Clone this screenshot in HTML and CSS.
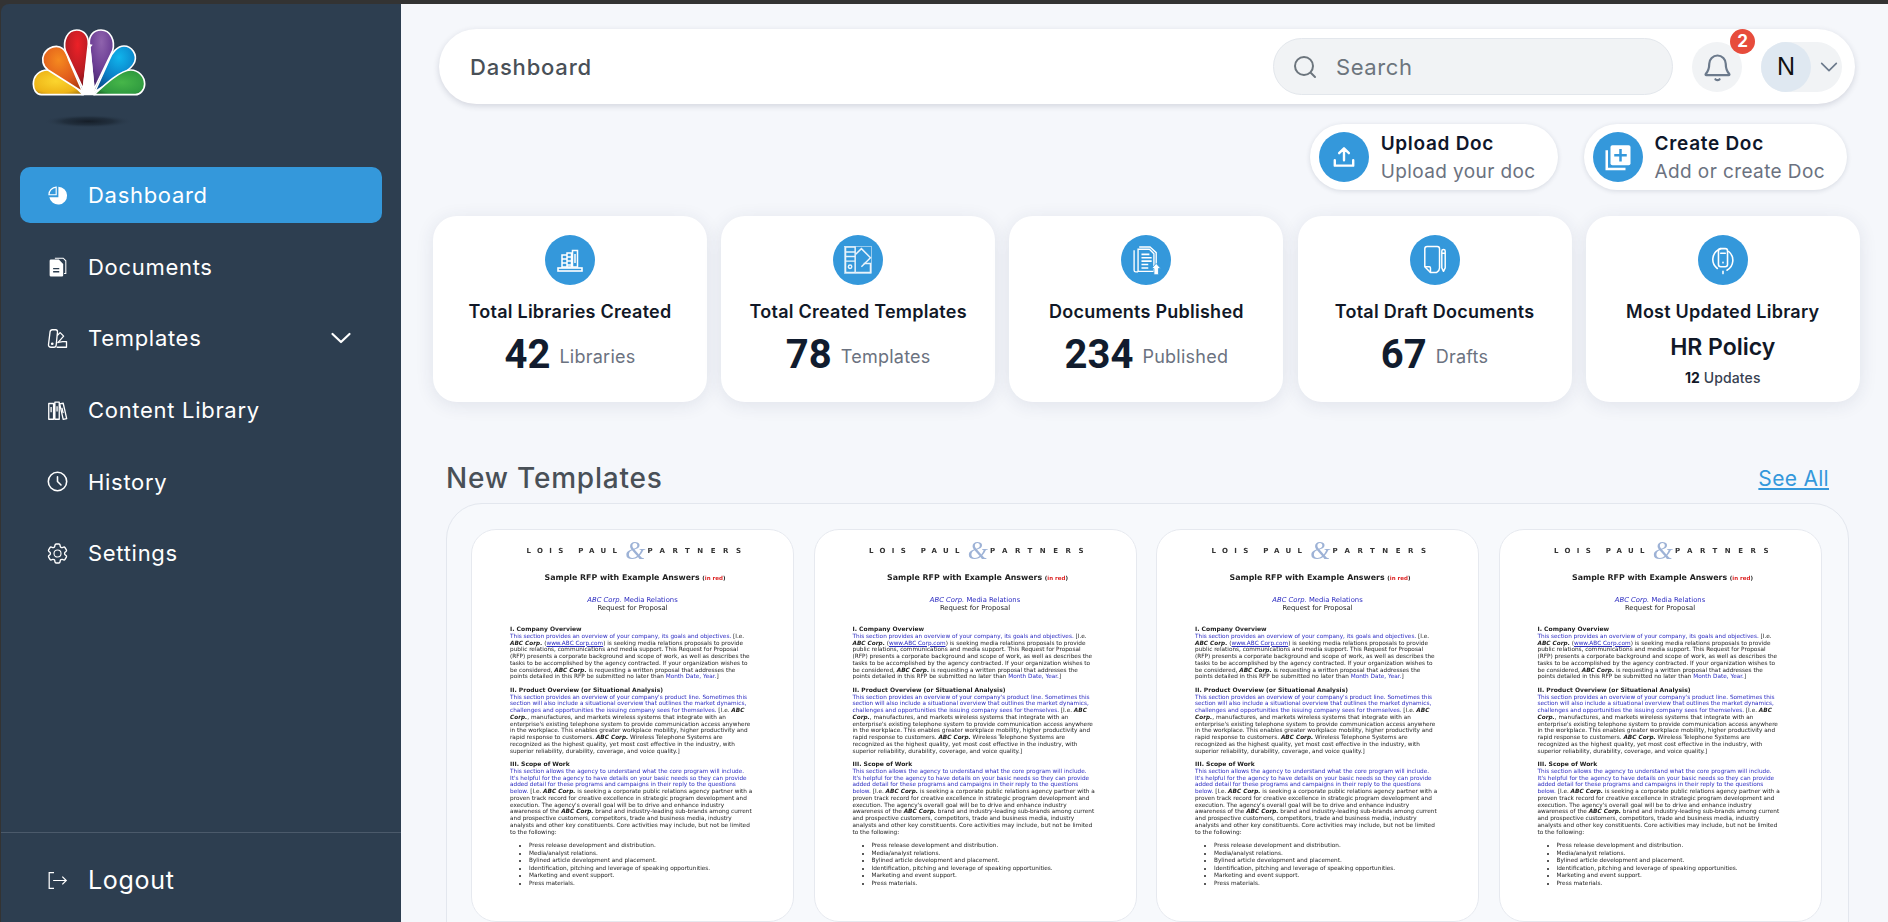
FILE: index.html
```html
<!DOCTYPE html>
<html lang="en">
<head>
  <meta charset="UTF-8">
  <title>Dashboard</title>
  <link rel="stylesheet" href="styles.css">
</head>
<body>
  <div class="app">
    <aside class="sidebar">
      <div class="logo">
        <svg width="140" height="120" viewBox="0 0 420 360">
          <defs>
            <radialGradient id="f-yellow" cx="0.45" cy="0.45" r="0.7"><stop offset="0" stop-color="#fbd52e"/><stop offset="0.7" stop-color="#eeb417"/><stop offset="1" stop-color="#a9780c"/></radialGradient>
            <radialGradient id="f-orange" cx="0.4" cy="0.3" r="0.8"><stop offset="0" stop-color="#f58a1f"/><stop offset="0.6" stop-color="#e0591b"/><stop offset="1" stop-color="#a8380f"/></radialGradient>
            <radialGradient id="f-red" cx="0.55" cy="0.25" r="0.8"><stop offset="0" stop-color="#ec2127"/><stop offset="0.6" stop-color="#b91c23"/><stop offset="1" stop-color="#6f0e13"/></radialGradient>
            <radialGradient id="f-purple" cx="0.5" cy="0.2" r="0.8"><stop offset="0" stop-color="#8f63ad"/><stop offset="0.6" stop-color="#6b3d94"/><stop offset="1" stop-color="#44246a"/></radialGradient>
            <radialGradient id="f-blue" cx="0.6" cy="0.25" r="0.8"><stop offset="0" stop-color="#10b5ec"/><stop offset="0.6" stop-color="#0a7cc4"/><stop offset="1" stop-color="#0a4d8c"/></radialGradient>
            <radialGradient id="f-green" cx="0.55" cy="0.5" r="0.7"><stop offset="0" stop-color="#46b649"/><stop offset="0.7" stop-color="#2f9a3f"/><stop offset="1" stop-color="#14521f"/></radialGradient>
            <radialGradient id="logo-shadow"><stop offset="0" stop-color="#151d27"/><stop offset="0.55" stop-color="#1d2936" stop-opacity="0.75"/><stop offset="1" stop-color="#2d3e50" stop-opacity="0"/></radialGradient>
          </defs>
          <ellipse cx="205" cy="304" rx="135" ry="20" fill="url(#logo-shadow)"/>
          <g stroke="#fff" stroke-width="5" stroke-linejoin="round">
            <path fill="url(#f-yellow)" d="M190 224H64C48 224 40 208 40 192C40 166 60 150 82 150C112 150 165 198 190 224Z"/>
            <path fill="url(#f-orange)" d="M188 216L84 150C68 138 64 118 72 102C84 80 112 72 128 86C138 94 142 106 146 118Z"/>
            <path fill="url(#f-red)" d="M190 208L136 92C128 62 142 30 170 30C194 30 206 50 205 72Z"/>
            <path fill="url(#f-purple)" d="M222 208L208 72C206 50 218 30 243 30C272 30 286 62 278 92Z"/>
            <path fill="url(#f-blue)" d="M224 216L268 118C276 98 292 78 312 78C336 78 352 104 344 126C338 142 320 154 304 164Z"/>
            <path fill="url(#f-green)" d="M222 224C250 198 300 150 332 150C356 150 374 170 374 192C374 210 360 224 346 224Z"/>
          </g>
          <path fill="#fff" d="M184 226L204 88L207 72L218 74L212 82L226 226Z"/>
        </svg>
      </div>
      <nav class="nav">
        <a class="nav-item active">
          <svg class="nav-icon" viewBox="0 0 24 24"><path fill="#fff" d="M13 2a10.200 10.200 0 1 1-10.300 12h10.300z"/><path fill="none" stroke="#fff" stroke-width="1.300" d="M10.500 2.400v8.800H2.200c0-4.800 3.700-8.400 8.300-8.800z"/></svg>
          Dashboard
        </a>
        <a class="nav-item">
          <svg class="nav-icon" viewBox="0 0 24 24"><path fill="none" stroke="#fff" stroke-width="1.200" d="M9 2.500h9.500l3 3v14.500h-2"/><path fill="#fff" d="M4.500 4h9l5 5v13a1.500 1.500 0 0 1-1.500 1.500H4.500A1.500 1.500 0 0 1 3 22V5.500A1.500 1.500 0 0 1 4.500 4z"/><path stroke="#2d3e50" stroke-width="1.500" d="M7 14.500h7M7 18h7"/></svg>
          Documents
        </a>
        <a class="nav-item">
          <svg class="nav-icon" viewBox="0 0 24 24" fill="none" stroke="#fff" stroke-width="1.500" stroke-linejoin="round"><path d="M3.500 4.500c.2-1.500 1-2.500 2.500-2.500h4c1.500 0 2 1 2 2.500l-1.500 15c-.2 1.600-1.200 2.500-2.500 2.500H4.500C2.800 22 1.500 21 1.700 19z"/><path d="M11.700 8.500l3.300-3.200 4 4-7 8"/><path d="M11 22h11.300v-6.500H18l-5.500 1"/><circle cx="6" cy="18" r=".8" fill="#fff"/></svg>
          Templates
          <svg class="nav-chevron" viewBox="0 0 24 24" fill="none" stroke="#fff" stroke-width="2.200" stroke-linecap="round" stroke-linejoin="round"><path d="M3.500 8l8.500 8 8.500-8"/></svg>
        </a>
        <a class="nav-item">
          <svg class="nav-icon" viewBox="0 0 24 24" fill="none" stroke="#fff" stroke-width="1.500" stroke-linejoin="round"><path d="M2 4h5.500v18H2zM9 2.500h5v19.500H9zM14.500 4.500l4-.8 4 17.500-4 1z"/><path d="M4.700 8v6M11.500 7v6M17 9l1.500 6"/></svg>
          Content Library
        </a>
        <a class="nav-item">
          <svg class="nav-icon" viewBox="0 0 24 24" fill="none" stroke="#fff" stroke-width="1.800" stroke-linecap="round"><circle cx="12" cy="12" r="10.500"/><path d="M12 6.500V12l4 4"/></svg>
          History
        </a>
        <a class="nav-item">
          <svg class="nav-icon" viewBox="0 0 24 24" fill="none" stroke="#fff" stroke-width="1.300"><path d="M9.594 3.940c.09-.542.56-.94 1.110-.94h2.593c.55 0 1.020.398 1.110.94l.213 1.281c.063.374.313.686.645.87.074.04.147.083.22.127.325.196.72.257 1.075.124l1.217-.456a1.125 1.125 0 0 1 1.370.49l1.296 2.247a1.125 1.125 0 0 1-.26 1.431l-1.003.827c-.293.241-.438.613-.43.992a7.723 7.723 0 0 1 0 .255c-.008.378.137.75.43.991l1.004.827c.424.35.534.955.26 1.430l-1.298 2.247a1.125 1.125 0 0 1-1.369.491l-1.217-.456c-.355-.133-.75-.072-1.076.124a6.470 6.470 0 0 1-.22.128c-.331.183-.581.495-.644.869l-.213 1.281c-.09.543-.56.94-1.110.94h-2.594c-.55 0-1.019-.398-1.110-.94l-.213-1.281c-.062-.374-.312-.686-.644-.87a6.520 6.520 0 0 1-.22-.127c-.325-.196-.72-.257-1.076-.124l-1.217.456a1.125 1.125 0 0 1-1.369-.49l-1.297-2.247a1.125 1.125 0 0 1 .26-1.431l1.004-.827c.292-.24.437-.613.43-.991a6.932 6.932 0 0 1 0-.255c.007-.38-.138-.751-.43-.992l-1.004-.827a1.125 1.125 0 0 1-.26-1.430l1.297-2.247a1.125 1.125 0 0 1 1.370-.491l1.216.456c.356.133.751.072 1.076-.124.072-.044.146-.086.22-.128.332-.183.582-.495.644-.869l.214-1.280Z" transform="translate(-2.400 -2.400) scale(1.200)"/><circle cx="12" cy="12" r="4"/></svg>
          Settings
        </a>
      </nav>
      <div class="sidebar-foot">
        <a class="nav-item logout">
          <svg class="nav-icon" viewBox="0 0 24 24" fill="none" stroke="#fff" stroke-width="1.400"><path d="M8 3H2.500v18H8"/><path d="M7 12h15M17.500 7.500L22 12l-4.500 4.500"/></svg>
          Logout
        </a>
      </div>
    </aside>

    <main class="main">
      <header class="topbar">
        <div class="topbar-title">Dashboard</div>
        <div class="search">
          <svg class="search-icon" viewBox="0 0 24 24" fill="none" stroke="#6c757d" stroke-width="2" stroke-linecap="round"><circle cx="11" cy="11" r="9"/><path d="M18 18l4 4"/></svg>
          <span>Search</span>
        </div>
        <div class="bell">
          <svg viewBox="0 0 24 24" width="33" height="33" fill="none" stroke="#6c7a8c" stroke-width="1.600" stroke-linejoin="round" stroke-linecap="round"><path d="M6 10a6 6 0 0 1 12 0c0 4.500 1.200 6 2.600 7.500a.5.5 0 0 1-.4.800H3.800a.5.5 0 0 1-.4-.8C4.800 16 6 14.500 6 10Z"/><path d="M10.500 21.300c.8.6 2.200.6 3 0"/></svg>
          <span class="badge">2</span>
        </div>
        <div class="user">
          <span class="avatar">N</span>
          <svg viewBox="0 0 24 24" width="22" height="22" fill="none" stroke="#6c7a8c" stroke-width="1.800" stroke-linecap="round" stroke-linejoin="round"><path d="M4 8l8 8 8-8"/></svg>
        </div>
      </header>

      <div class="actions">
        <a class="action">
          <span class="round-icon action-icon"><svg viewBox="0 0 24 24" width="26" height="26" fill="none" stroke="#fff" stroke-width="2.200" stroke-linecap="round" stroke-linejoin="round"><path d="M12 15V4M7.500 8.500L12 4l4.500 4.500M3.500 15v5h17v-5"/></svg></span>
          <span class="action-text"><b>Upload Doc</b><small>Upload your doc</small></span>
        </a>
        <a class="action">
          <span class="round-icon action-icon"><svg viewBox="0 0 24 24" width="30" height="30"><path fill="#fff" d="M7.500 2.500h13a1.500 1.500 0 0 1 1.500 1.500v13a1.500 1.500 0 0 1-1.500 1.500h-13A1.500 1.500 0 0 1 6 17V4a1.500 1.500 0 0 1 1.500-1.500z"/><path fill="none" stroke="#3498db" stroke-width="2" d="M14 5.500v10M9 10.500h10"/><path fill="none" stroke="#fff" stroke-width="2" d="M3 6.500V21.500h15"/></svg></span>
          <span class="action-text"><b>Create Doc</b><small>Add or create Doc</small></span>
        </a>
      </div>

      <section class="stats">
        <div class="stat">
          <span class="round-icon"><svg viewBox="0 0 30 30" width="30" height="30" fill="none" stroke="#fff" stroke-width="1.500"><path d="M7 10h5v12H7zM12 8h4.500v14H12zM17.500 5.500h5V22h-5z"/><path d="M7 14h5M7 18h5M12 12h4.500M12 16h4.500M12 20h4.500M20 9v9"/><rect x="3" y="23" width="24" height="3" stroke-width="1.600"/></svg></span>
          <h3>Total Libraries Created</h3>
          <p class="stat-line"><strong>42</strong> <span>Libraries</span></p>
        </div>
        <div class="stat">
          <span class="round-icon"><svg viewBox="0 0 30 30" width="34" height="34" fill="none" stroke="#e8f3fb" stroke-width="1.300"><rect x="3" y="3" width="24" height="24" stroke-width=".5"/><path d="M4 3.500h8.500V26H4zM4 8h8.500M4 12h8.500M4 16h8.500"/><circle cx="8" cy="21" r="1.500"/><path d="M13 10l5-5 8 8-8 8"/><path d="M13 26h13v-8h-6"/></svg></span>
          <h3>Total Created Templates</h3>
          <p class="stat-line"><strong>78</strong> <span>Templates</span></p>
        </div>
        <div class="stat">
          <span class="round-icon"><svg viewBox="0 0 30 30" width="34" height="34" fill="none" stroke="#fff" stroke-width="1.200"><path d="M9 3.500h9.500l5.500 5v11M4.500 6.500V24c0 1 .8 1.500 1.500 1.500h2"/><path d="M8 5.500H18l4 4V25H8z" fill="#3498db"/><path stroke-width="1.400" d="M11 10h7M11 13h9M11 16h9M11 19h6M11 22h6"/><path fill="#fff" d="M24 18l4 4.500h-2V28h-4v-5.500h-2z" stroke="#3498db" stroke-width=".7"/></svg></span>
          <h3>Documents Published</h3>
          <p class="stat-line"><strong>234</strong> <span>Published</span></p>
        </div>
        <div class="stat">
          <span class="round-icon"><svg viewBox="0 0 30 30" width="34" height="34" fill="none" stroke="#fff" stroke-width="1.300" stroke-linejoin="round"><path d="M8 3h9c1.200 0 2 .8 2 2v17c0 2-1 3-2.500 4H11l-5-5V5c0-1.200.8-2 2-2z"/><path d="M6 21h4c1 0 1 1 1 1v4"/><path d="M21 7c0-1.800 3-1.800 3 0v15l-1.500 3-1.500-3zM21 9h3"/></svg></span>
          <h3>Total Draft Documents</h3>
          <p class="stat-line"><strong>67</strong> <span>Drafts</span></p>
        </div>
        <div class="stat">
          <span class="round-icon"><svg viewBox="0 0 30 30" width="34" height="34" fill="none" stroke="#fff" stroke-width="1.400" stroke-linecap="round"><path d="M10 22.500A10 10 0 0 1 13 5M20 7.500A10 10 0 0 1 18.500 24"/><rect x="11" y="5" width="8" height="16" rx="2"/><path d="M13 9h4M15 25v2M15 17v.5"/></svg></span>
          <h3>Most Updated Library</h3>
          <p class="stat-big">HR Policy</p>
          <p class="stat-note"><b>12</b> Updates</p>
        </div>
      </section>

      <div class="section-head">
        <h2>New Templates</h2>
        <a class="see-all">See All</a>
      </div>

      <section class="panel" id="doc-panel"></section>

      <template id="doc-template">
        <article class="doc">
          <div class="doc-brand"><span class="brand-name">LOIS PAUL</span><i>&amp;</i><span>PARTNERS</span></div>
          <p class="doc-title">Sample RFP with Example Answers <small>(<em>in red</em>)</small></p>
          <p class="doc-sub"><span class="blue"><i>ABC Corp.</i> Media Relations</span><br>Request for Proposal</p>
          <div class="doc-body">
            <h4>I. Company Overview</h4>
            <p><span class="blue">This section provides an overview of your company, its goals and objectives.</span> [I.e.<br>
            <b>ABC Corp.</b> (<u class="blue">www.ABC Corp.com</u>) is seeking media relations proposals to provide<br>
            public relations, communications and media support. This Request for Proposal<br>
            (RFP) presents a corporate background and scope of work, as well as describes the<br>
            tasks to be accomplished by the agency contracted. If your organization wishes to<br>
            be considered, <b>ABC Corp.</b> is requesting a written proposal that addresses the<br>
            points detailed in this RFP be submitted no later than <span class="blue">Month Date, Year.</span>]</p>
            <h4>II. Product Overview (or Situational Analysis)</h4>
            <p><span class="blue">This section provides an overview of your company's product line. Sometimes this<br>
            section will also include a situational overview that outlines the market dynamics,<br>
            challenges and opportunities the issuing company sees for themselves.</span> [I.e. <b>ABC<br>
            Corp.</b>, manufactures, and markets wireless systems that integrate with an<br>
            enterprise's existing telephone system to provide communication access anywhere<br>
            in the workplace. This enables greater workplace mobility, higher productivity and<br>
            rapid response to customers. <b>ABC Corp.</b> Wireless Telephone Systems are<br>
            recognized as the highest quality, yet most cost effective in the industry, with<br>
            superior reliability, durability, coverage, and voice quality.]</p>
            <h4>III. Scope of Work</h4>
            <p><span class="blue">This section allows the agency to understand what the core program will include.<br>
            It's helpful for the agency to have details on your basic needs so they can provide<br>
            added detail for these programs and campaigns in their reply to the questions<br>
            below.</span> [I.e. <b>ABC Corp.</b> is seeking a corporate public relations agency partner with a<br>
            proven track record for creative excellence in strategic program development and<br>
            execution. The agency's overall goal will be to drive and enhance industry<br>
            awareness of the <b>ABC Corp.</b> brand and industry-leading sub-brands among current<br>
            and prospective customers, competitors, trade and business media, industry<br>
            analysts and other key constituents. Core activities may include, but not be limited<br>
            to the following:</p>
            <ul>
              <li>Press release development and distribution.</li>
              <li>Media/analyst relations.</li>
              <li>Bylined article development and placement.</li>
              <li>Identification, pitching and leverage of speaking opportunities.</li>
              <li>Marketing and event support.</li>
              <li>Press materials.</li>
            </ul>
          </div>
        </article>
      </template>
    </main>
  </div>
  <script src="script.js"></script>
</body>
</html>
```

FILE: styles.css
```css
* {
  box-sizing: border-box;
}

html, body {
  margin: 0;
  height: 100%;
  overflow: hidden;
}

body {
  font-family: Inter, "Noto Sans", sans-serif;
  background: #333;
  color: #111827;
  padding-top: 4px;
}

h2, h3, h4, p {
  margin: 0;
}

.app {
  display: flex;
  height: 918px;
}

/* sidebar */
.sidebar {
  width: 400px;
  flex-shrink: 0;
  background: #2d3e50;
  margin-left: 1px;
  border-top-left-radius: 8px;
  display: flex;
  flex-direction: column;
  color: #fff;
}

.logo {
  height: 163px;
  padding: 16px 0 0 19px;
}

.nav {
  flex: 1;
  display: flex;
  flex-direction: column;
  padding: 0 19px;
}

.nav-item {
  display: flex;
  align-items: center;
  height: 56px;
  margin-bottom: 15.700px;
  padding-left: 27px;
  border-radius: 10px;
  font-size: 22px;
  letter-spacing: 0.7px;
  color: #fff;
}

.nav-item.active {
  background: #3498db;
}

.nav-icon {
  width: 21px;
  height: 21px;
  margin-right: 20px;
  flex-shrink: 0;
}

.nav-chevron {
  width: 24px;
  height: 24px;
  margin-left: auto;
  margin-right: 29px;
}

.sidebar-foot {
  height: 90px;
  border-top: 1px solid #4b5a6b;
  padding: 19px 19px 0;
}

.logout {
  font-size: 25px;
  margin: 0;
}

/* main area */
.main {
  flex: 1;
  min-width: 0;
  background: #f5f7fb;
  overflow: hidden;
}

.topbar {
  display: flex;
  align-items: center;
  height: 75px;
  margin: 25px 33px 0 38px;
  padding: 0 13px 0 31px;
  background: #fff;
  border-radius: 38px;
  box-shadow: 0 2px 6px rgba(30, 40, 70, 0.16);
}

.topbar-title {
  flex: 1;
  font-size: 22px;
  font-weight: 500;
  letter-spacing: 0.8px;
  color: #495057;
}

.search {
  display: flex;
  align-items: center;
  width: 400px;
  height: 57px;
  padding-left: 19px;
  background: #f1f3f5;
  border: 1px solid #e3e7ec;
  border-radius: 29px;
  font-size: 22px;
  letter-spacing: 0.6px;
  color: #6c757d;
}

.search-icon {
  width: 24px;
  height: 24px;
  margin-right: 19px;
}

.bell {
  position: relative;
  display: flex;
  align-items: center;
  justify-content: center;
  width: 50px;
  height: 50px;
  margin-left: 19px;
  background: #f1f3f5;
  border-radius: 50%;
}

.badge {
  position: absolute;
  top: -13px;
  right: -13px;
  width: 25px;
  height: 25px;
  background: #e74c3c;
  border-radius: 50%;
  color: #fff;
  font-size: 17px;
  font-weight: 700;
  line-height: 25px;
  text-align: center;
}

.user {
  display: flex;
  align-items: center;
  width: 81px;
  height: 50px;
  margin-left: 19px;
  background: #f1f3f5;
  border-radius: 25px;
}

.avatar {
  display: flex;
  align-items: center;
  justify-content: center;
  width: 50px;
  height: 50px;
  margin-right: 7px;
  background: #dfe8f1;
  border-radius: 50%;
  font-family: "Liberation Sans", sans-serif;
  font-size: 25px;
  color: #111;
}

.actions {
  display: flex;
  justify-content: flex-end;
  gap: 26px;
  margin: 20px 41px 0 0;
}

.action {
  display: flex;
  align-items: center;
  height: 66px;
  padding: 0 22px 0 9px;
  background: #fff;
  border-radius: 33px;
  box-shadow: 0 1px 5px rgba(30, 40, 70, 0.14);
}

.round-icon {
  display: flex;
  align-items: center;
  justify-content: center;
  width: 50px;
  height: 50px;
  background: #3498db;
  border-radius: 50%;
}

.action-icon {
  margin-right: 12px;
}

.action-text {
  display: flex;
  flex-direction: column;
  gap: 5px;
  font-size: 19px;
  letter-spacing: 0.7px;
}

.action-text b {
  font-weight: 600;
  color: #0f172a;
}

.action-text small {
  font-size: 19px;
  letter-spacing: 0.4px;
  color: #6b7280;
}

/* stat cards */
.stats {
  display: grid;
  grid-template-columns: repeat(5, 274px);
  gap: 14.200px;
  margin: 26px 0 0 32px;
}

.stat {
  display: flex;
  flex-direction: column;
  align-items: center;
  height: 186px;
  padding-top: 19px;
  background: #fff;
  border-radius: 24px;
  box-shadow: 0 3px 18px rgba(40, 50, 90, 0.1);
}

.stat h3 {
  margin-top: 16px;
  font-size: 18px;
  font-weight: 600;
  letter-spacing: 0.25px;
  color: #111827;
}

.stat-line {
  display: flex;
  align-items: center;
  gap: 9px;
  margin-top: 9px;
}

.stat-line strong {
  font-family: Roboto, sans-serif;
  font-size: 40px;
  font-weight: 700;
  color: #111c2e;
}

.stat-line span {
  font-size: 18px;
  letter-spacing: 0.25px;
  color: #6b7280;
  margin-top: 4px;
}

.stat-big {
  margin-top: 11px;
  font-size: 23px;
  font-weight: 600;
  color: #111827;
}

.stat-note {
  margin-top: 8px;
  font-size: 14px;
  font-weight: 500;
  letter-spacing: 0.1px;
  color: #374151;
}

.stat-note b {
  color: #111827;
}

/* new templates */
.section-head {
  display: flex;
  align-items: center;
  justify-content: space-between;
  height: 40px;
  margin: 56px 59px 0 45px;
}

.section-head h2 {
  font-size: 28px;
  font-weight: 500;
  letter-spacing: 0.8px;
  color: #495057;
}

.see-all {
  font-size: 21px;
  letter-spacing: 0.3px;
  color: #3498db;
  text-decoration: underline;
}

.panel {
  display: grid;
  grid-template-columns: repeat(4, 323px);
  gap: 19.500px;
  height: 460px;
  margin: 5px 39px 0 45px;
  padding: 25px 24px 0;
  background: #f7f9fc;
  border: 1px solid #e3e7ee;
  border-radius: 36px;
}

.doc {
  height: 393px;
  padding-top: 11px;
  background: #fff;
  border: 1px solid #e6e9ef;
  border-radius: 25px;
  font-family: "DejaVu Sans", sans-serif;
  color: #222;
  filter: blur(0.25px);
}

.doc-brand {
  display: flex;
  align-items: center;
  justify-content: center;
  gap: 2px;
  height: 20px;
  padding-left: 10px;
  font-size: 7px;
  font-weight: 700;
  color: #333;
}

.doc-brand span {
  letter-spacing: 7.500px;
}

.doc-brand .brand-name {
  letter-spacing: 6.300px;
}

.doc-brand i {
  font-family: "Liberation Serif", serif;
  font-size: 26px;
  font-weight: 400;
  color: #9db2d6;
}

.doc-title {
  margin-top: 12px;
  padding-left: 5px;
  font-size: 7.850px;
  font-weight: 700;
  text-align: center;
}

.doc-title small {
  font-size: 5.500px;
}

.doc-title em {
  font-style: normal;
  color: #d22;
}

.doc-sub {
  margin-top: 15px;
  font-size: 6.800px;
  line-height: 7.500px;
  text-align: center;
}

.blue {
  color: #2b2bc0;
}

.doc-body {
  margin-top: 14px;
  padding-left: 38px;
  font-size: 5.750px;
  line-height: 6.750px;
  white-space: nowrap;
}

.doc-body b {
  font-style: italic;
}

.doc-body h4 {
  font-size: 6px;
  line-height: 6.750px;
  font-weight: 700;
}

.doc-body p {
  margin-bottom: 6.750px;
}

.doc-body ul {
  margin: 0;
  padding-left: 19px;
  line-height: 7.500px;
}
```

FILE: script.js
```js
// the same sample document is shown in all four template cards
var panel = document.getElementById("doc-panel");
var template = document.getElementById("doc-template");

for (var i = 0; i < 4; i++) {
  panel.appendChild(template.content.cloneNode(true));
}
```
